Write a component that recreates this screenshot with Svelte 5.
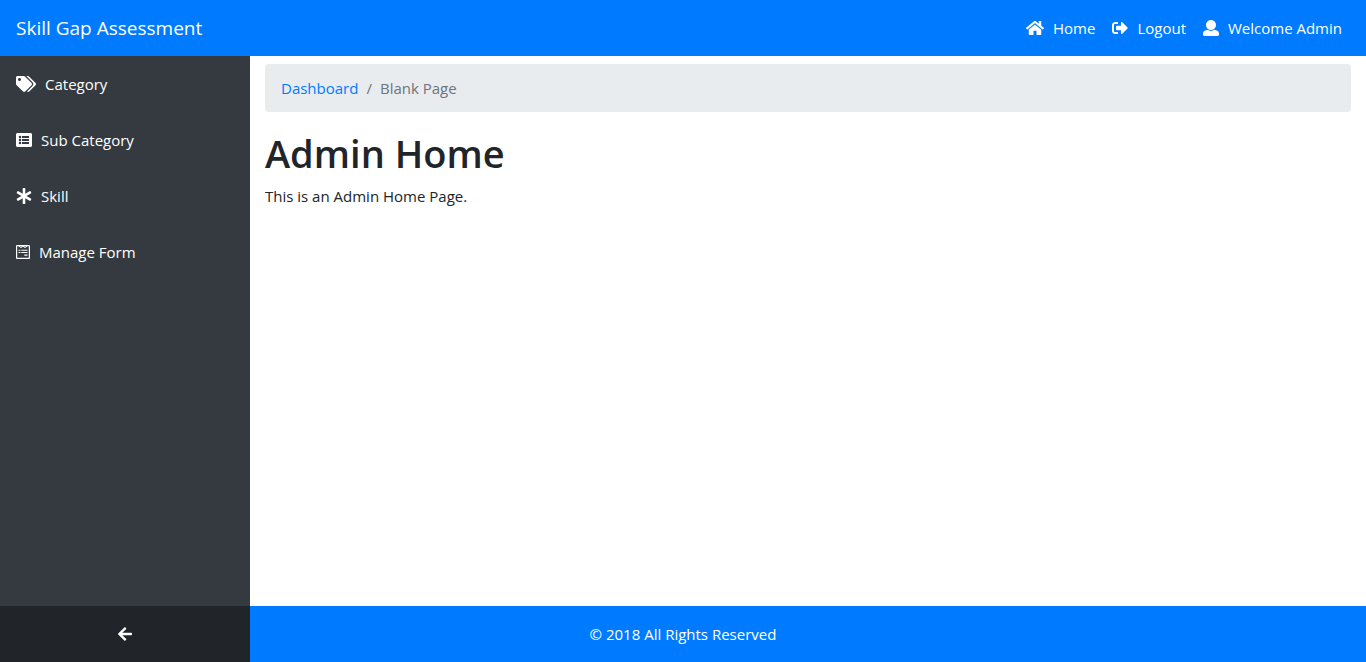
<script>
  const icons = {
    home: { w: 18, box: '0 0 576 512', d: 'M488 312.7V456c0 13.3-10.7 24-24 24H348c-6.6 0-12-5.4-12-12V356c0-6.6-5.4-12-12-12h-72c-6.6 0-12 5.4-12 12v112c0 6.6-5.4 12-12 12H112c-13.3 0-24-10.7-24-24V312.7c0-3.6 1.6-7 4.4-9.3l188-154.8c4.4-3.6 10.8-3.6 15.3 0l188 154.8c2.7 2.3 4.3 5.7 4.3 9.3zm83.6-60.9L488 182.9V44.4c0-6.6-5.4-12-12-12h-56c-6.6 0-12 5.4-12 12V117l-89.5-73.7c-17.7-14.6-43.3-14.6-61 0L4.4 251.8c-5.1 4.2-5.8 11.8-1.6 16.9l25.5 31c4.2 5.1 11.8 5.8 16.9 1.6l235.2-193.7c4.4-3.6 10.8-3.6 15.3 0l235.2 193.7c5.1 4.2 12.7 3.5 16.9-1.6l25.5-31c4.2-5.2 3.4-12.7-1.7-16.9z' },
    logout: { w: 16, box: '0 0 512 512', d: 'M497 273L329 441c-15 15-41 4.5-41-17v-96H152c-13.3 0-24-10.7-24-24v-96c0-13.3 10.7-24 24-24h136V88c0-21.4 25.9-32 41-17l168 168c9.3 9.4 9.3 24.6 0 34zM192 436v-40c0-6.6-5.4-12-12-12H96c-17.7 0-32-14.3-32-32V160c0-17.7 14.3-32 32-32h84c6.6 0 12-5.4 12-12V76c0-6.6-5.4-12-12-12H96c-53 0-96 43-96 96v192c0 53 43 96 96 96h84c6.6 0 12-5.4 12-12z' },
    user: { w: 16, box: '0 0 512 512', d: 'M256 0c88.366 0 160 71.634 160 160s-71.634 160-160 160S96 248.366 96 160 167.634 0 256 0zm183.283 333.821l-71.313-17.828c-74.923 53.89-165.738 41.864-223.94 0l-71.313 17.828C29.981 344.505 0 382.903 0 426.955V464c0 26.51 21.49 48 48 48h416c26.51 0 48-21.49 48-48v-37.045c0-44.052-29.981-82.45-72.717-93.134z' },
    tags: { w: 20, box: '0 0 640 512', d: 'M497.941 225.941L286.059 14.059A48 48 0 0 0 252.118 0H48C21.49 0 0 21.49 0 48v204.118a48 48 0 0 0 14.059 33.941l211.882 211.882c18.744 18.745 49.136 18.746 67.882 0l204.118-204.118c18.745-18.745 18.745-49.137 0-67.882zM112 160c-26.51 0-48-21.49-48-48s21.49-48 48-48 48 21.49 48 48-21.49 48-48 48zm513.941 133.823L421.823 497.941c-18.745 18.745-49.137 18.745-67.882 0l-.36-.36L527.64 323.522c16.999-16.999 26.362-39.6 26.362-63.64s-9.362-46.641-26.362-63.64L331.397 0h48.721a48 48 0 0 1 33.941 14.059l211.882 211.882c18.745 18.745 18.745 49.137 0 67.882z' },
    list: { w: 16, box: '0 0 512 512', d: 'M464 480H48c-26.5 0-48-21.500-48-48V80c0-26.500 21.500-48 48-48h416c26.500 0 48 21.500 48 48v352c0 26.500-21.500 48-48 48zM128 120a40 40 0 1 0 0 80 40 40 0 0 0 0-80zm0 96a40 40 0 1 0 0 80 40 40 0 0 0 0-80zm0 96a40 40 0 1 0 0 80 40 40 0 0 0 0-80zM204 128c-7 0-12 5-12 12v40c0 7 5 12 12 12h200c7 0 12-5 12-12v-40c0-7-5-12-12-12zm0 96c-7 0-12 5-12 12v40c0 7 5 12 12 12h200c7 0 12-5 12-12v-40c0-7-5-12-12-12zm0 96c-7 0-12 5-12 12v40c0 7 5 12 12 12h200c7 0 12-5 12-12v-40c0-7-5-12-12-12z' },
    asterisk: { w: 16, box: '0 0 512 512', d: 'M478.21 334.093L336 256l142.21-78.093c11.795-6.477 15.961-21.384 9.232-33.037l-19.48-33.741c-6.728-11.653-21.72-15.499-33.227-8.523L296 186.718l3.475-162.204C299.763 11.061 288.937 0 275.48 0h-38.96c-13.456 0-24.283 11.061-23.994 24.514L216 186.718 77.265 102.607c-11.506-6.976-26.499-3.13-33.227 8.523l-19.48 33.741c-6.728 11.653-2.562 26.56 9.233 33.037L176 256 33.79 334.093c-11.795 6.477-15.961 21.384-9.232 33.037l19.48 33.741c6.728 11.653 21.721 15.499 33.227 8.523L216 325.282l-3.475 162.204C212.237 500.939 223.064 512 236.52 512h38.961c13.456 0 24.283-11.061 23.995-24.514L296 325.282l138.735 84.111c11.506 6.976 26.499 3.13 33.227-8.523l19.48-33.741c6.728-11.653 2.563-26.559-9.232-33.036z' },
    form: { w: 14, box: '0 0 14 16', d: 'M1 1h12a1 1 0 0 1 1 1v12a1 1 0 0 1-1 1H1a1 1 0 0 1-1-1V2a1 1 0 0 1 1-1zM1.200 2.200v11.600h11.600V2.200h-1.200L9.100 4.100 7 2.700 4.900 4.100 2.400 2.200zM3.800 2.200l1.100.8 1.100-.8zM8 2.200l1.100.8 1.100-.8zM2.500 5.700h2v1.100h-2zM5.300 5.700h6.200v1.100H5.300zM2.500 8h2v1.100h-2zM5.300 8h6.200v1.100H5.300zM8.300 10.400h3.200v1.400H8.300z' },
    back: { w: 14, box: '0 0 448 512', d: 'M257.5 445.1l-22.2 22.2c-9.4 9.4-24.6 9.4-33.9 0L7 273c-9.4-9.4-9.4-24.6 0-33.9L201.400 44.700c9.400-9.400 24.600-9.400 33.900 0l22.200 22.200c9.500 9.500 9.300 25-.4 34.300L136.600 216H424c13.300 0 24 10.700 24 24v32c0 13.300-10.700 24-24 24H136.600l120.500 114.800c9.800 9.300 10 24.800.4 34.300z' }
  };
  const top = [['home', 'Home'], ['logout', 'Logout'], ['user', 'Welcome Admin']];
  const side = [['tags', 'Category'], ['list', 'Sub Category'], ['asterisk', 'Skill'], ['form', 'Manage Form']];
</script>

{#snippet icon(name)}
  <svg width={icons[name].w} height="16" viewBox={icons[name].box} aria-hidden="true">
    <path fill="currentColor" fill-rule="evenodd" d={icons[name].d} />
  </svg>
{/snippet}

<div class="page">
  <header>
    <a class="brand" href="#home">Skill Gap Assessment</a>
    <nav class="top" aria-label="Account">
      {#each top as [name, label]}
        <a href="#{name}">{@render icon(name)}<span>{label}</span></a>
      {/each}
    </nav>
  </header>

  <div class="body">
    <nav class="side" aria-label="Sections">
      {#each side as [name, label]}
        <a href="#{name}">{@render icon(name)}<span>{label}</span></a>
      {/each}
    </nav>
    <main>
      <ol class="crumbs">
        <li><a href="#dashboard">Dashboard</a></li>
        <li>Blank Page</li>
      </ol>
      <h1>Admin Home</h1>
      <p>This is an Admin Home Page.</p>
    </main>
  </div>

  <footer>
    <button type="button" aria-label="Collapse sidebar">{@render icon('back')}</button>
    <span class="copy">© 2018 All Rights Reserved</span>
  </footer>
</div>

<style>
  .page {
    display: flex;
    flex-direction: column;
    min-height: 100vh;
    background: #fff;
    color: #212529;
    font: 400 15px/24px 'Segoe UI', 'Open Sans', sans-serif;
  }
  svg { display: block; flex: none; }
  a { text-decoration: none; }
  header {
    display: flex;
    align-items: center;
    justify-content: space-between;
    min-height: 56px;
    padding: 0 24px 0 16px;
    background: #007bff;
  }
  header a, .side a { color: #fff; }
  .brand { font-size: 19px; line-height: 30px; }
  .top { display: flex; gap: 17px; }
  .top a, .side a { display: flex; align-items: center; gap: 9px; }
  .body { display: flex; flex: 1; }
  .side { width: 250px; flex: none; background: #343a40; }
  .side a { padding: 16px; }
  main { flex: 1; min-width: 0; padding: 8px 15px; }
  .crumbs {
    display: flex;
    margin: 0 0 16px;
    padding: 12px 16px;
    border-radius: 4px;
    background: #e9ecef;
    color: #6c757d;
    list-style: none;
  }
  .crumbs a { color: #007bff; }
  .crumbs li + li::before { content: '/'; padding: 0 8px; }
  h1 { margin: 0 0 6px; font-size: 38px; line-height: 50px; font-weight: 600; }
  p { margin: 0; }
  footer {
    display: grid;
    grid-template-columns: 250px 1fr 250px;
    align-items: center;
    min-height: 56px;
    background: #007bff;
    color: #fff;
  }
  footer button {
    display: flex;
    align-items: center;
    justify-content: center;
    align-self: stretch;
    padding: 0;
    border: 0;
    background: #212529;
    color: #fff;
    cursor: pointer;
  }
  .copy { text-align: center; }
</style>
